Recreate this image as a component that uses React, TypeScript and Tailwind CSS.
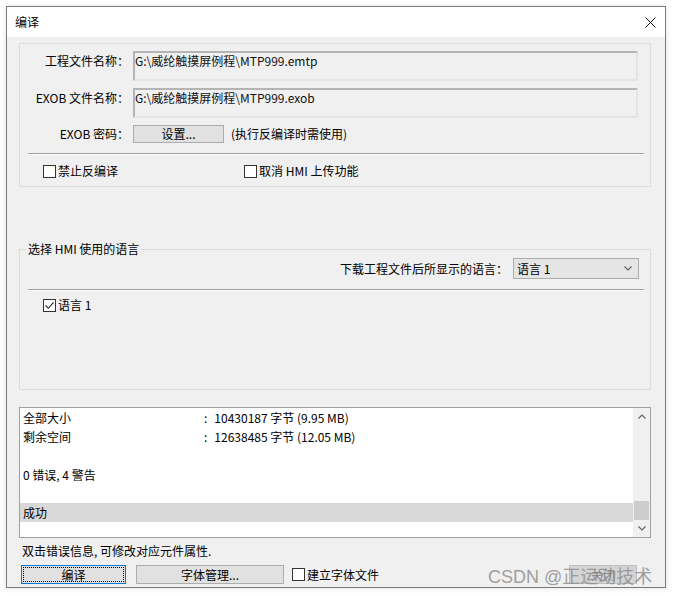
import React from 'react';

function CheckBox({
  checked = false,
  label,
  className = '',
}: {
  checked?: boolean;
  label: string;
  className?: string;
}) {
  return (
    <div className={`flex items-center h-[18px] ${className}`}>
      <span className="w-[13px] h-[13px] border border-[#333333] bg-white flex items-center justify-center">
        {checked && (
          <svg width="11" height="11" viewBox="0 0 11 11">
            <path d="M1.5 5.5 L4.3 8.3 L9.6 2.4" fill="none" stroke="#222222" strokeWidth="1.1" />
          </svg>
        )}
      </span>
      <span className="ml-[2px]">{label}</span>
    </div>
  );
}

function Separator() {
  return <div className="ml-[8px] mr-[6px] h-[2px] border-t border-t-[#a0a0a0] border-b border-b-white" />;
}

function Chevron({ up = false }: { up?: boolean }) {
  return (
    <svg width="8" height="5" viewBox="0 0 8 5">
      <path
        d={up ? 'M0.5 4.5 L4 1 L7.5 4.5' : 'M0.5 0.5 L4 4 L7.5 0.5'}
        fill="none"
        stroke="#606060"
        strokeWidth="1.1"
      />
    </svg>
  );
}

export default function App() {
  const rows = [
    { label: '全部大小', value: '10430187 字节 (9.95 MB)' },
    { label: '剩余空间', value: '12638485 字节 (12.05 MB)' },
    { label: '', value: '' },
    { label: '0 错误, 4 警告', value: '' },
    { label: '', value: '' },
    { label: '成功', value: '', selected: true },
  ];

  return (
    <div className="relative w-[674px] h-[596px] bg-white pt-[6px] pl-[6px] text-[12px] leading-[16px] text-black font-['Noto_Sans_CJK_SC','Liberation_Sans',sans-serif]">
      {/* Dialog window */}
      <div className="w-[660px] h-[582px] border border-[#7a7a7a] flex flex-col shadow-[0_0_6px_rgba(0,0,0,0.12)]">
        {/* Title bar */}
        <div className="h-[30px] bg-white flex items-center pl-[8px] pr-[9px]">
          <span className="flex-1">编译</span>
          <svg width="11" height="11" viewBox="0 0 11 11">
            <path d="M0.5 0.5 L10.5 10.5 M10.5 0.5 L0.5 10.5" stroke="#111111" strokeWidth="1" />
          </svg>
        </div>

        {/* Body */}
        <div className="flex-1 bg-[#f0f0f0] flex flex-col">
          {/* Project files group */}
          <div className="ml-[12px] mt-[6px] w-[632px] border border-[#dcdcdc] pt-[7px] pb-[6px]">
            <div className="flex items-start">
              <div className="w-[109px] text-right pt-[2px]">工程文件名称：</div>
              <div className="ml-[4px] w-[505px] h-[30px] border-2 border-t-[#b4b4b4] border-l-[#b4b4b4] border-r-[#e4e4e4] border-b-[#e4e4e4] text-[#111111]">
                G:\威纶触摸屏例程\MTP999.emtp
              </div>
            </div>
            <div className="flex items-start mt-[7px]">
              <div className="w-[109px] text-right pt-[2px]">EXOB 文件名称：</div>
              <div className="ml-[4px] w-[505px] h-[30px] border-2 border-t-[#b4b4b4] border-l-[#b4b4b4] border-r-[#e4e4e4] border-b-[#e4e4e4] text-[#111111]">
                G:\威纶触摸屏例程\MTP999.exob
              </div>
            </div>
            <div className="flex items-center mt-[7px] h-[18px]">
              <div className="w-[109px] text-right">EXOB 密码：</div>
              <div className="ml-[4px] w-[91px] h-[18px] border border-[#adadad] bg-[#e1e1e1] flex items-center justify-center">
                设置...
              </div>
              <span className="ml-[7px]">(执行反编译时需使用)</span>
            </div>
            <div className="mt-[10px]">
              <Separator />
            </div>
            <div className="flex items-center mt-[7px]">
              <CheckBox className="ml-[23px]" label="禁止反编译" />
              <CheckBox className="ml-[126px]" label="取消 HMI 上传功能" />
            </div>
          </div>

          {/* Language group */}
          <fieldset className="ml-[12px] mt-[55px] w-[632px] border border-[#dcdcdc] min-w-0">
            <legend className="ml-[7px] px-px leading-[14px]">选择 HMI 使用的语言</legend>
            <div className="h-[131px]">
              <div className="mt-[2px] flex items-center justify-end pr-[11px]">
                <span className="mr-[5px]">下载工程文件后所显示的语言：</span>
                <div className="w-[126px] h-[21px] bg-[#e5e5e5] border border-[#adadad] flex items-center pl-[3px] pr-[6px]">
                  <span className="flex-1">语言 1</span>
                  <Chevron />
                </div>
              </div>
              <div className="mt-[10px]">
                <Separator />
              </div>
              <div className="mt-[5px]">
                <CheckBox className="ml-[23px]" checked label="语言 1" />
              </div>
            </div>
          </fieldset>

          {/* Output list */}
          <div className="ml-[12px] mt-[17px] w-[632px] h-[131px] border border-[#a0a0a0] bg-white flex">
            <div className="flex-1">
              {rows.map((row, i) => (
                <div
                  key={i}
                  className={`h-[19px] leading-[19px] pl-[3px] flex ${row.selected ? 'bg-[#d9d9d9]' : ''}`}
                >
                  {row.value ? (
                    <>
                      <span className="w-[181px]">{row.label}</span>
                      <span>:</span>
                      <span className="ml-[7px]">{row.value}</span>
                    </>
                  ) : (
                    <span>{row.label}</span>
                  )}
                </div>
              ))}
            </div>
            <div className="w-[17px] bg-[#f0f0f0] flex flex-col">
              <div className="h-[17px] flex items-center justify-center">
                <Chevron up />
              </div>
              <div className="flex-1 flex flex-col justify-end">
                <div className="h-[19px] mx-[1px] bg-[#cdcdcd]" />
              </div>
              <div className="h-[17px] flex items-center justify-center">
                <Chevron />
              </div>
            </div>
          </div>

          <div className="ml-[15px] mt-[5px]">双击错误信息, 可修改对应元件属性.</div>

          {/* Buttons */}
          <div className="mt-[6px] ml-[14px] h-[19px] flex items-center">
            <div className="w-[105px] h-[19px] border border-[#0078d7] bg-[#e1e1e1] p-px">
              <div className="h-full border border-dotted border-black flex items-center justify-center">编译</div>
            </div>
            <div className="ml-[10px] w-[148px] h-[19px] border border-[#adadad] bg-[#e1e1e1] flex items-center justify-center">
              字体管理...
            </div>
            <CheckBox className="ml-[8px]" label="建立字体文件" />
            <div className="ml-auto mr-[28px] w-[68px] h-[19px] border border-[#bfbfbf] bg-[#d4d4d4] text-[#838383] flex items-center justify-center">
              关闭
            </div>
          </div>
        </div>
      </div>

      {/* Watermark */}
      <div className="absolute left-[488px] top-[566px] text-[18px] leading-[22px] text-[#8c8c8c] opacity-80 font-['Liberation_Sans','Noto_Sans_CJK_SC',sans-serif]">
        CSDN @正运动技术
      </div>
    </div>
  );
}
